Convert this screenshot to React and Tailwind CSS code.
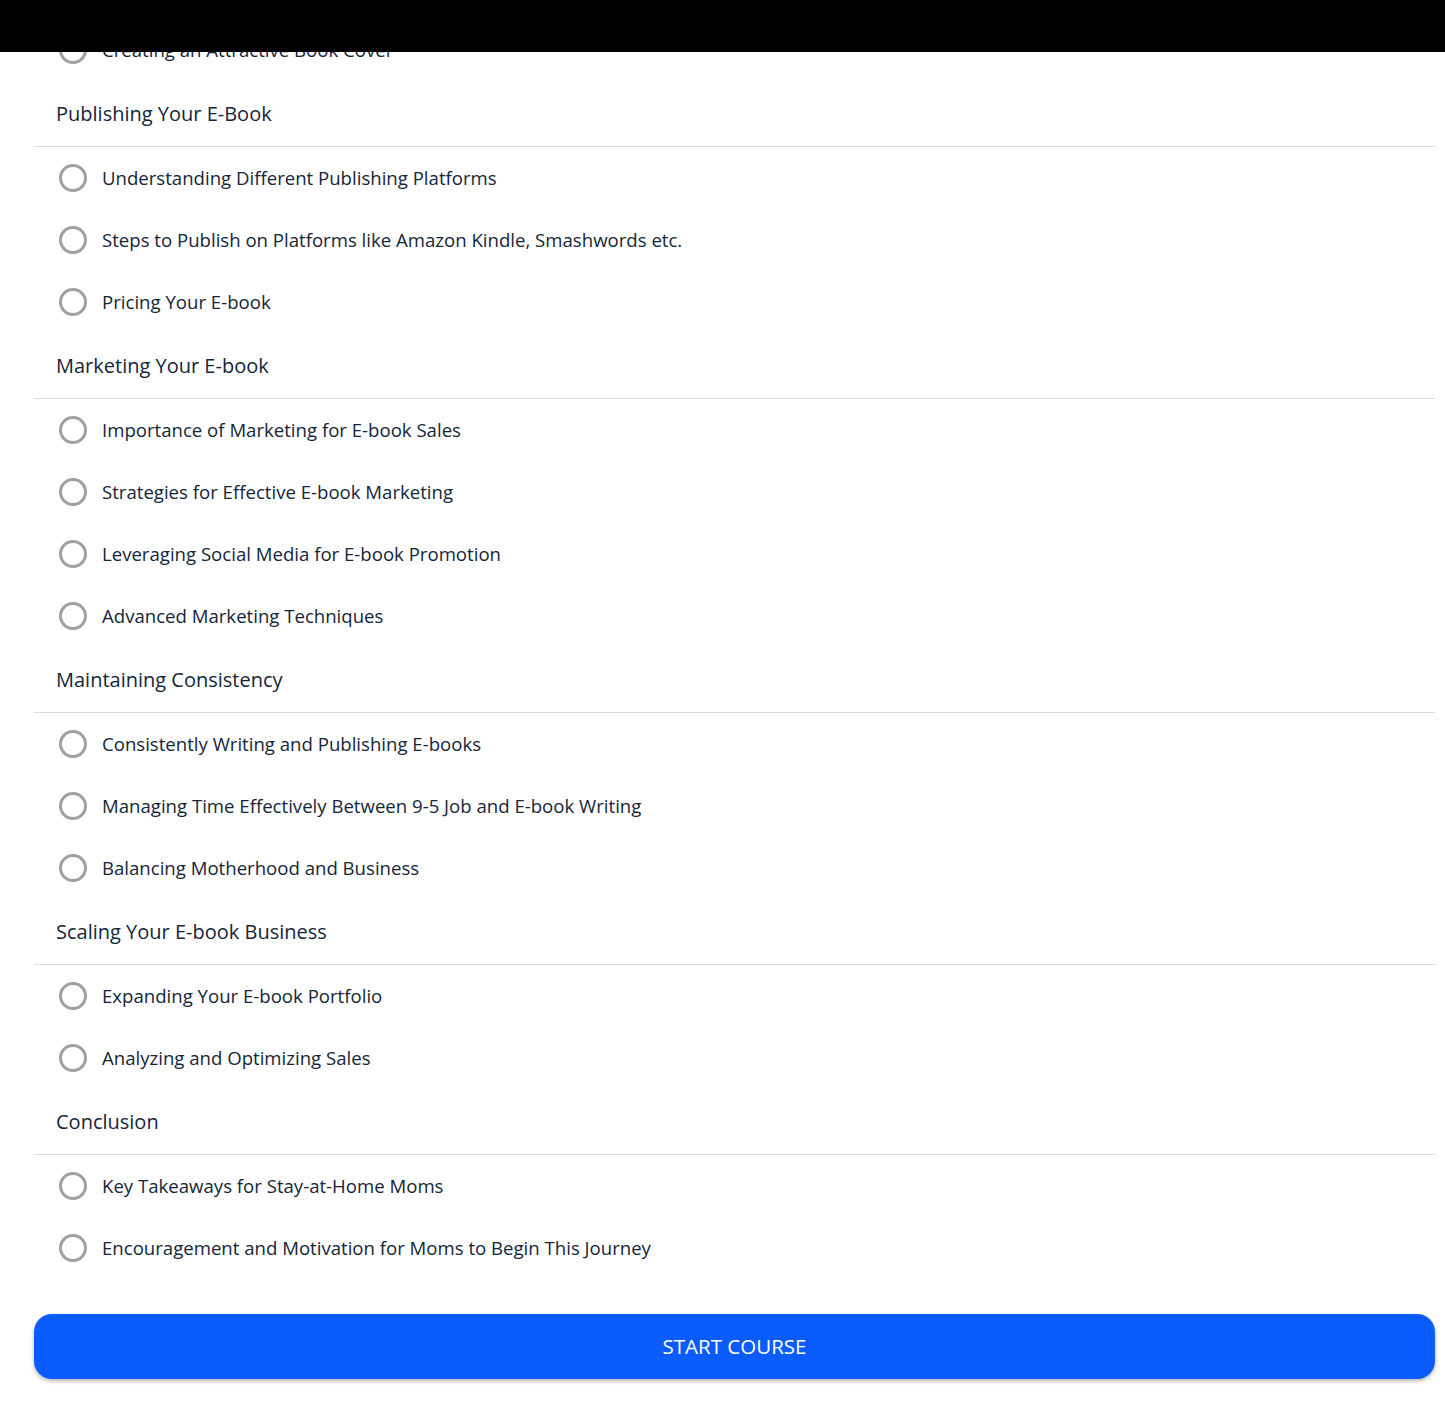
import React from 'react'

const SECTIONS = [
  {
    title: null,
    items: ['Creating an Attractive Book Cover'],
  },
  {
    title: 'Publishing Your E-Book',
    items: [
      'Understanding Different Publishing Platforms',
      'Steps to Publish on Platforms like Amazon Kindle, Smashwords etc.',
      'Pricing Your E-book',
    ],
  },
  {
    title: 'Marketing Your E-book',
    items: [
      'Importance of Marketing for E-book Sales',
      'Strategies for Effective E-book Marketing',
      'Leveraging Social Media for E-book Promotion',
      'Advanced Marketing Techniques',
    ],
  },
  {
    title: 'Maintaining Consistency',
    items: [
      'Consistently Writing and Publishing E-books',
      'Managing Time Effectively Between 9-5 Job and E-book Writing',
      'Balancing Motherhood and Business',
    ],
  },
  {
    title: 'Scaling Your E-book Business',
    items: ['Expanding Your E-book Portfolio', 'Analyzing and Optimizing Sales'],
  },
  {
    title: 'Conclusion',
    items: [
      'Key Takeaways for Stay-at-Home Moms',
      'Encouragement and Motivation for Moms to Begin This Journey',
    ],
  },
]

function Lesson({ label }) {
  return (
    <div className="h-[62px] flex items-center pl-[25px] gap-[15px]">
      <span className="w-[28px] h-[28px] rounded-full border-[3px] border-[#a0a0a0] shrink-0" />
      <span className="text-[18.6px] text-[#14263a]">{label}</span>
    </div>
  )
}

export default function App() {
  return (
    <div className="min-h-screen bg-white font-['Open_Sans',sans-serif]">
      {/* top bar sits over the scrolled list */}
      <div className="fixed top-0 left-0 right-0 h-[52px] bg-black z-10" />

      <main className="pt-[19px] pl-[34px] pr-[10px] pb-[23px]">
        {SECTIONS.map((s, i) => (
          <section key={i}>
            {s.title && (
              <div className="h-[66px] flex items-center pl-[22px] border-b border-[#dcdcdc]">
                <h2 className="text-[20px] text-[#14263a]">{s.title}</h2>
              </div>
            )}
            {s.items.map((it) => (
              <Lesson key={it} label={it} />
            ))}
          </section>
        ))}

        <button className="mt-[35px] w-full h-[65px] rounded-[18px] bg-[#0a5cff] text-white text-[20.5px] font-medium shadow-[0_2px_4px_rgba(0,0,0,0.3)]">
          START COURSE
        </button>
      </main>
    </div>
  )
}
